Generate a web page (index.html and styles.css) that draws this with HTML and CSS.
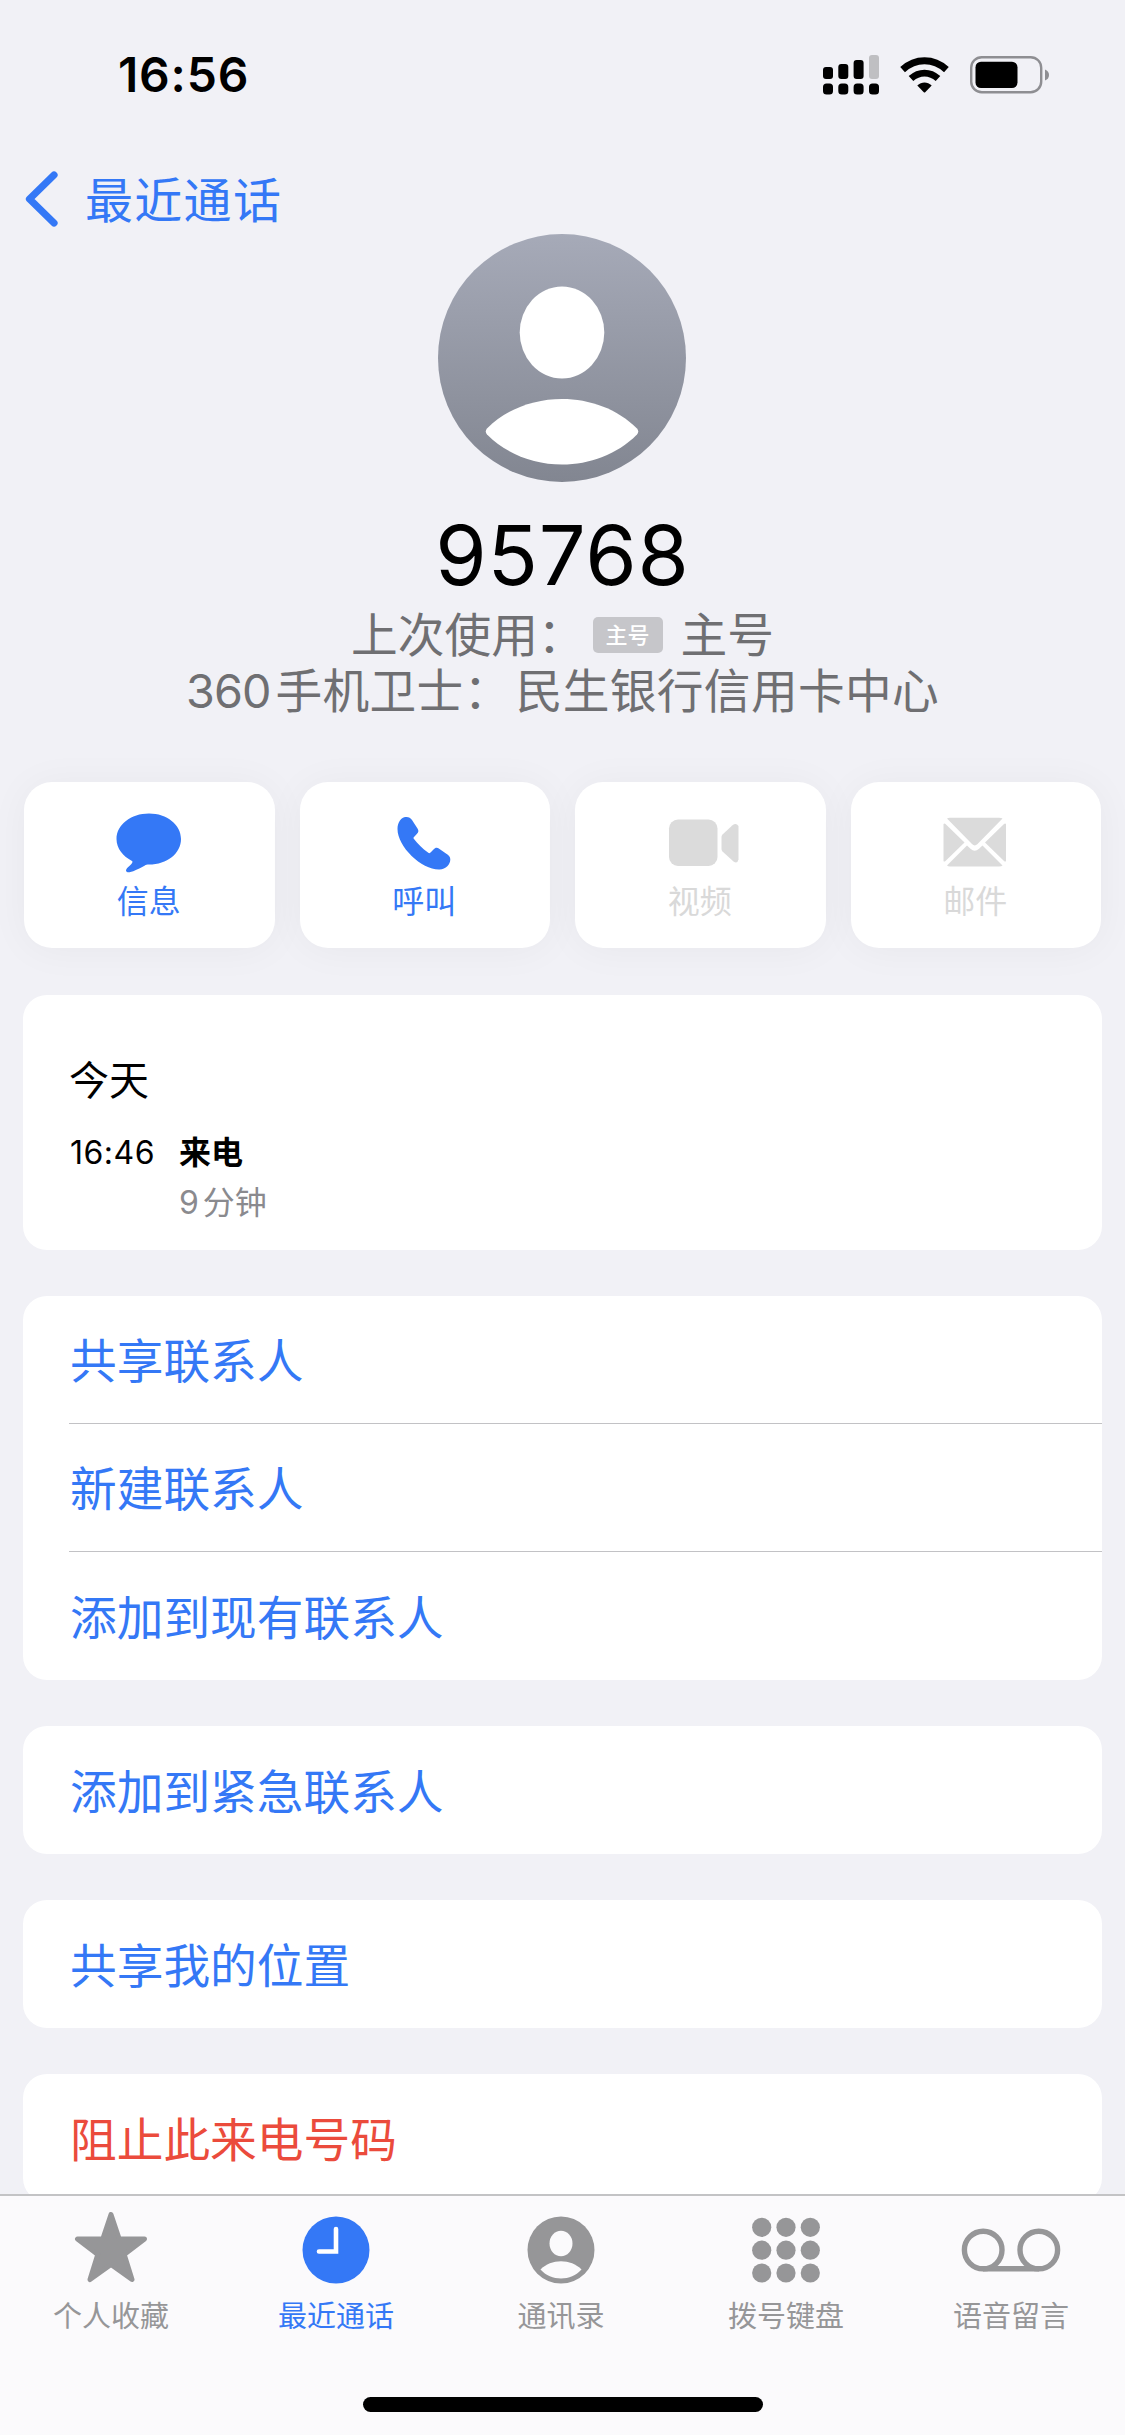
FILE: index.html
```html
<!DOCTYPE html>
<html lang="zh-CN">
<head>
<meta charset="utf-8">
<title>95768</title>
<link rel="stylesheet" href="styles.css">
</head>
<body>
<div class="app">
  <main class="content">
    <header class="status">
      <span class="status-time">16:56</span>
      <div class="status-icons">
        <svg class="signal" width="56" height="40" viewBox="0 0 56 40">
          <rect x="0" y="12" width="10" height="12" rx="3"/>
          <rect x="15.3" y="9" width="10" height="15" rx="3"/>
          <rect x="30.6" y="5" width="10" height="19" rx="3"/>
          <rect x="46" y="0" width="10" height="24" rx="3" fill="#bfbfc2"/>
          <rect x="0" y="28.5" width="10" height="11" rx="3.5"/>
          <rect x="15.3" y="28.5" width="10" height="11" rx="3.5"/>
          <rect x="30.6" y="28.5" width="10" height="11" rx="3.5"/>
          <rect x="46" y="28.5" width="10" height="11" rx="3.5"/>
        </svg>
        <svg class="wifi" width="49" height="37" viewBox="0 0 49 37">
          <path d="M2.6 12.6C15.5 0.8 33.5 0.8 46.4 12.6" fill="none" stroke="#000" stroke-width="7"/>
          <path d="M11 21.6C19 14.2 30 14.2 38 21.6" fill="none" stroke="#000" stroke-width="6.8"/>
          <path d="M17.3 28.4C21.5 24.4 27.5 24.4 31.7 28.4L25.2 35.2Q24.5 35.9 23.8 35.2Z"/>
        </svg>
        <svg class="battery" width="80" height="38" viewBox="0 0 80 38">
          <rect x="1.2" y="1.2" width="70" height="35" rx="10.5" fill="none" stroke="#8e8e92" stroke-width="2.4"/>
          <rect x="5.5" y="5.7" width="42" height="26.3" rx="5.5"/>
          <path d="M75 13.5Q79 15 79 19T75 24.5Z" fill="#8e8e92"/>
        </svg>
      </div>
    </header>

    <nav class="nav">
      <svg width="34" height="56" viewBox="0 0 34 56"><path d="M29 4L4.5 28L29 52" fill="none" stroke="#3478f6" stroke-width="7.2" stroke-linecap="round" stroke-linejoin="round"/></svg>
      <span class="nav-back">最近通话</span>
    </nav>

    <section class="profile">
      <svg class="avatar" width="248" height="248" viewBox="0 0 248 248">
        <defs><linearGradient id="shade" x1="0" y1="0" x2="0" y2="1"><stop offset="0" stop-color="#a6aab8"/><stop offset="1" stop-color="#828691"/></linearGradient></defs>
        <circle cx="124" cy="124" r="124" fill="url(#shade)"/>
        <ellipse cx="124" cy="98.5" rx="42.3" ry="46" fill="#fff"/>
        <path d="M49 194.5C88 155 160 155 199 194.5Q201.5 197.5 199 200.5C159 240.5 89 240.5 49 200.5Q46.500 197.5 49 194.5Z" fill="#fff"/>
      </svg>
      <h1 class="number">95768</h1>
      <p class="meta"><span>上次使用：</span><span class="badge">主号</span><span>主号</span></p>
      <p class="meta source"><span class="digits">360</span><span class="label">手机卫士：</span><span>民生银行信用卡中心</span></p>
    </section>

    <section class="actions">
      <div class="action">
        <svg width="66" height="60" viewBox="0 0 66 60"><path d="M33 0.5C51 0.5 65 12.5 65 28S51 55.500 33 55.500C31 55.5 30 55.7 28.5 56.6C22 60.5 15 64 11.5 63.6C9.5 63.3 9.7 61.2 11 59.500C13.5 56.500 18 53 16 51.5C7 47 0.5 38 0.5 28C0.5 12.5 15 0.5 33 0.5Z" transform="scale(1 .93)"/></svg>
        <span>信息</span>
      </div>
      <div class="action">
        <svg width="66" height="60" viewBox="2 0 66 60"><path d="M15.5 4C11 3.2 6.5 8.5 6.500 16C6.5 34 31 57 48.5 56.500C55 56.2 59.3 51.2 59.3 46.5C59.3 44.5 58.3 43 56.8 41.8L48.5 36C46 34.3 44.5 34.5 42.5 36.5L39.5 39.5C38.5 40.4 38 40.3 37 39.6C31.5 35.5 26.5 30.5 23 26C22.3 25 22.3 24.7 23 23.9L25.8 21C27.6 19.2 27.9 17.8 26.5 15.5L21 7C19.5 4.9 18 4.2 15.5 4Z" transform="translate(2 0)"/></svg>
        <span>呼叫</span>
      </div>
      <div class="action disabled">
        <svg width="78" height="60" viewBox="-8 0 78 60"><rect x="0" y="6.5" width="48.5" height="46.5" rx="9"/><path d="M53.5 21.5L63.5 12.3Q67 9.5 69.5 13V46.5Q68.5 51 64.5 48.5L53.5 38.5Q52.5 37.3 52.5 36V24Q52.5 22.5 53.5 21.5Z"/></svg>
        <span>视频</span>
      </div>
      <div class="action disabled">
        <svg width="64" height="60" viewBox="0 0 64 60"><path d="M4 5.5Q5 4.7 7 4.7H56Q58.5 4.7 59.5 5.5L34.5 31Q31.7 33.8 29 31Z"/><path d="M0.500 11Q1.3 10 2.5 11L21.5 29.5L2.5 48Q1 49 0.5 48Z"/><path d="M63 11Q62.2 10 61 11L42 29.5L61 48Q62.5 49 63 48Z"/><path d="M4 52.5L24 32.5L27.5 35.8Q31.7 39.5 36 35.8L39.5 32.5L59.5 52.5Q58.5 53.5 56 53.5H7Q5 53.5 4 52.5Z"/></svg>
        <span>邮件</span>
      </div>
    </section>

    <section class="groups">
      <div class="card log">
        <h2 class="log-day">今天</h2>
        <div class="log-row">
          <span class="log-time">16:46</span>
          <div class="log-info">
            <span class="log-type">来电</span>
            <span class="log-duration"><span>9</span><span>分钟</span></span>
          </div>
        </div>
      </div>
      <div class="card">
        <div class="row">共享联系人</div>
        <div class="row">新建联系人</div>
        <div class="row">添加到现有联系人</div>
      </div>
      <div class="card"><div class="row">添加到紧急联系人</div></div>
      <div class="card"><div class="row">共享我的位置</div></div>
      <div class="card"><div class="row danger">阻止此来电号码</div></div>
    </section>
  </main>

  <footer class="tabbar">
    <div class="tabs">
      <div class="tab">
        <svg width="76" height="74" viewBox="0 2.5 76 74"><path d="M38 5L46.2 29.5H71.5L51.2 45L59 70L38 55L17 70L24.8 45L4.5 29.5H29.8Z" stroke="#969698" stroke-width="5" stroke-linejoin="round"/></svg>
        <span>个人收藏</span>
      </div>
      <div class="tab active">
        <svg width="68" height="74" viewBox="0 0 68 74"><circle cx="34" cy="38" r="33.5"/><path d="M34 17V39.5H17" fill="none" stroke="#fff" stroke-width="4.6" stroke-linecap="round" stroke-linejoin="miter"/></svg>
        <span>最近通话</span>
      </div>
      <div class="tab">
        <svg width="68" height="74" viewBox="0 0 68 74"><circle cx="34" cy="38" r="33.5"/><ellipse cx="34" cy="31.5" rx="11.5" ry="12.7" fill="#fbfafc"/><path d="M13.500 57.5C24 46.5 44 46.5 54.500 57.5C44 69.5 24 69.5 13.5 57.5Z" fill="#fbfafc"/></svg>
        <span>通讯录</span>
      </div>
      <div class="tab">
        <svg width="68" height="74" viewBox="0 0 68 74">
          <circle cx="9.7" cy="15.3" r="9.6"/><circle cx="34" cy="15.3" r="9.6"/><circle cx="58.3" cy="15.3" r="9.6"/>
          <circle cx="9.7" cy="38.2" r="9.6"/><circle cx="34" cy="38.2" r="9.6"/><circle cx="58.3" cy="38.2" r="9.6"/>
          <circle cx="9.7" cy="61" r="9.6"/><circle cx="34" cy="61" r="9.6"/><circle cx="58.3" cy="61" r="9.6"/>
        </svg>
        <span>拨号键盘</span>
      </div>
      <div class="tab">
        <svg width="100" height="74" viewBox="0 0 100 74"><g fill="none" stroke="#969698" stroke-width="5.4"><circle cx="22.2" cy="38" r="18.8"/><circle cx="77.8" cy="38" r="18.8"/><path d="M22 56.8H78"/></g></svg>
        <span>语音留言</span>
      </div>
    </div>
    <div class="home-indicator"></div>
  </footer>
</div>
</body>
</html>
```

FILE: styles.css
```css
* { box-sizing: border-box; }
body {
  margin: 0;
  background: #f1f1f6;
  color: #000;
  font-family: Inter, "Noto Sans CJK SC", sans-serif;
}
h1, h2, p { margin: 0; font-weight: 400; }
svg { display: block; flex: none; }
span { white-space: nowrap; }

.app { display: flex; flex-direction: column; width: 1125px; height: 2435px; overflow: hidden; }
.content { flex: 1; min-height: 0; overflow: hidden; }

.status { display: flex; justify-content: space-between; align-items: center; height: 150px; padding: 0 75px 0 118px; }
.status-time { font-size: 48px; font-weight: 600; line-height: 60px; letter-spacing: .8px; }
.status-icons { display: flex; align-items: center; }
.wifi { margin-left: 21px; }
.battery { margin-left: 21px; }

.nav { display: flex; align-items: center; height: 84px; padding: 14px 0 0 25px; color: #3478f6; }
.nav-back { margin-left: 26px; padding-top: 3px; font-size: 48px; letter-spacing: 1.3px; line-height: 60px; }

.profile { display: flex; flex-direction: column; align-items: center; }
.avatar { margin-right: 1px; }
.number { margin-top: 23px; font-size: 83px; line-height: 100px; letter-spacing: .8px; }
.meta { display: flex; align-items: center; height: 56px; padding-top: 3px; font-size: 46.7px; line-height: 56px; color: #6f6f72; }
.badge {
  display: flex; align-items: center; justify-content: center;
  width: 70px; height: 36px; margin: 0 18px 0 8px;
  border-radius: 5px; background: #c6c6ca; color: #fff;
  font-size: 22px; font-weight: 500;
}
.source { letter-spacing: .35px; }
.digits { margin-right: 5px; letter-spacing: -.9px; }
.label { margin-right: 5px; }

.actions { display: grid; grid-template-columns: repeat(4, 1fr); gap: 25px; margin-top: 65px; padding: 0 24px; }
.action {
  display: flex; flex-direction: column; align-items: center;
  height: 166px; padding: 31px 1px 0 0;
  border-radius: 28px; background: #fff;
  box-shadow: 0 2px 40px rgba(0, 0, 0, .045);
  color: #3478f6; fill: #3478f6;
  font-size: 32px; line-height: 40px;
}
.action span { margin-top: 9px; }
.action.disabled { color: #d9d9d9; fill: #dbdbdb; }

.groups { display: flex; flex-direction: column; gap: 46px; margin-top: 47px; padding: 0 23px; }
.card { flex: none; border-radius: 24px; background: #fff; padding-left: 46px; }
.row { display: flex; align-items: center; height: 128px; padding: 3px 0 0 1px; font-size: 46.7px; line-height: 60px; color: #3478f6; }
.row:not(:last-child) { border-bottom: 1px solid #c2c2c5; }
.row.danger { color: #eb4b3c; }

.log { height: 255px; padding: 61px 46px 0; }
.log-day { font-size: 40px; line-height: 50px; }
.log-row { display: flex; gap: 26px; margin-top: 27px; font-size: 32px; line-height: 40px; }
.log-time { width: 84px; padding-left: 1px; letter-spacing: .5px; }
.log-info { display: flex; flex-direction: column; gap: 10px; }
.log-type { font-weight: 600; }
.log-duration { display: flex; gap: 4px; color: #8a8a8e; }

.tabbar { flex: none; display: flex; flex-direction: column; justify-content: space-between; align-items: center; height: 241px; padding-bottom: 23px; border-top: 2px solid #c3c3c5; background: #fbfafc; }
.tabs { display: grid; grid-template-columns: repeat(5, 1fr); width: 100%; margin-left: -3px; padding-top: 15px; }
.tab { display: flex; flex-direction: column; align-items: center; color: #969698; fill: #969698; font-size: 29px; line-height: 36px; }
.tab svg { margin-bottom: 13px; margin-top: 1px; }
.tab.active { color: #3478f6; fill: #3478f6; }
.home-indicator { width: 400px; height: 15px; border-radius: 8px; background: #000; }
```
